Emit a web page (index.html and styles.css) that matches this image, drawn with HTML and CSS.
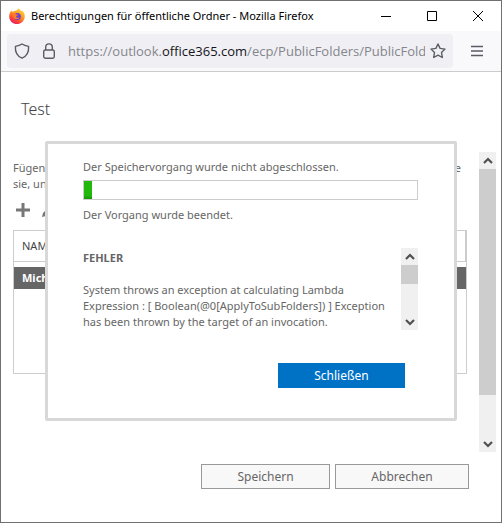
FILE: index.html
```html
<!DOCTYPE html>
<html lang="de">
<head>
    <meta charset="UTF-8">
    <meta name="viewport" content="width=device-width, initial-scale=1.0">
    <title>Berechtigungen für öffentliche Ordner</title>
    <link rel="stylesheet" href="styles.css">
</head>
<body>
    <div class="window">
        <!-- title bar -->
        <header class="titlebar">
            <svg class="logo" viewBox="0 0 16 16">
                <defs>
                    <linearGradient id="flame" x1="0.8" y1="0" x2="0.2" y2="1">
                        <stop offset="0" stop-color="#ffe03a"/>
                        <stop offset="0.45" stop-color="#ff9220"/>
                        <stop offset="0.75" stop-color="#fb4037"/>
                        <stop offset="1" stop-color="#e0157a"/>
                    </linearGradient>
                </defs>
                <path d="M2.4 2.4 C2.8 3 3.2 3.5 3.8 3.9 C5.2 2.8 6.6 2.8 7.6 2.6 C8.4 1.8 9 .8 10 .2 C10.2 1.6 11.6 2 12.6 3.2 C13 3 12.9 2.7 13 2.4 C15 4 15.9 6.2 15.8 8.4 C15.6 12.8 12.2 16 8 16 C3.6 16 .3 12.6 .2 8.4 C.2 6 1.2 4.2 2.4 2.4 Z" fill="url(#flame)"/>
                <circle cx="8.4" cy="8.6" r="3.5" fill="#6b45d0"/>
                <path d="M3.4 6 C5 5 6.5 5.6 7.4 6.4 L9.2 6.8 C8.8 8 7.2 7.8 7 8.8 C7.4 10.2 9.4 9.8 10.4 9.8 C9 11.8 5.6 11.4 4.6 9.4 Z" fill="#ff7a26"/>
            </svg>
            <h1>Berechtigungen für öffentliche Ordner - Mozilla Firefox</h1>
            <div class="controls">
                <button type="button" aria-label="Minimieren"><svg viewBox="0 0 12 12"><path d="M1 6.5H11"/></svg></button>
                <button type="button" aria-label="Maximieren"><svg viewBox="0 0 12 12"><path d="M1.5 1.5H10.5V10.5H1.5Z"/></svg></button>
                <button type="button" aria-label="Fenster schließen"><svg viewBox="0 0 12 12"><path d="M1 1L11 11M11 1L1 11"/></svg></button>
            </div>
        </header>

        <!-- address bar -->
        <nav class="navbar">
            <div class="urlbar">
                <svg class="nav-icon" viewBox="0 0 16 16"><path d="M8 1 C10 2.4 12.4 3 14.6 3.4 C15 9 12.4 13.4 8 15.2 C3.6 13.4 1 9 1.4 3.4 C3.6 3 6 2.4 8 1 Z"/></svg>
                <svg class="nav-icon" viewBox="0 0 16 16"><rect x="2.7" y="7" width="10.6" height="8.2" rx="1.6"/><path d="M4.7 7V4.2A3.3 3.3 0 0 1 11.3 4.2V7"/></svg>
                <a class="url" href="#">https://outlook.<span>office365.com</span>/ecp/PublicFolders/PublicFold</a>
                <button type="button" aria-label="Lesezeichen"><svg class="nav-icon" viewBox="0 0 16 16"><path d="M8 1 L10.1 5.4 L15 6.1 L11.5 9.5 L12.3 14.5 L8 12.2 L3.7 14.5 L4.5 9.5 L1 6.1 L5.9 5.4 Z"/></svg></button>
            </div>
            <button type="button" class="menu" aria-label="Menü"><svg class="nav-icon" viewBox="0 0 16 16"><path d="M2 3.5H14M2 8H14M2 12.5H14"/></svg></button>
        </nav>

        <main class="page">
            <h2>Test</h2>
            <div class="scroll-area">
                <div class="content">
                    <div class="hint">
                        <p>Fügen<br>sie, un</p>
                        <p>e</p>
                    </div>
                    <div class="toolbar">
                        <button type="button" aria-label="Hinzufügen"><svg viewBox="0 0 16 16"><path d="M8 1V15M1 8H15" stroke="#777" stroke-width="3"/></svg></button>
                        <button type="button" aria-label="Bearbeiten"><svg viewBox="0 0 16 16"><path d="M1 15L2 11L11 2L14 5L5 14Z" fill="#777"/></svg></button>
                    </div>
                    <div class="list">
                        <table>
                            <thead>
                                <tr><th>NAME</th></tr>
                            </thead>
                            <tbody>
                                <tr><td>Mich</td></tr>
                            </tbody>
                        </table>
                    </div>
                </div>
                <div class="scrollbar">
                    <button type="button" aria-label="Nach oben"><svg viewBox="0 0 10 10"><path d="M1 7L5 3L9 7"/></svg></button>
                    <div class="track"><div class="thumb"></div></div>
                    <button type="button" aria-label="Nach unten"><svg viewBox="0 0 10 10"><path d="M1 3L5 7L9 3"/></svg></button>
                </div>
            </div>
            <div class="actions">
                <button type="button">Speichern</button>
                <button type="button">Abbrechen</button>
            </div>

            <!-- error dialog -->
            <div class="dialog" role="dialog">
                <p>Der Speichervorgang wurde nicht abgeschlossen.</p>
                <div class="progress"><div class="bar"></div></div>
                <p>Der Vorgang wurde beendet.</p>
                <div class="error">
                    <div class="error-text">
                        <h3>FEHLER</h3>
                        <p>System throws an exception at calculating Lambda<br>Expression : [ Boolean(@0[ApplyToSubFolders]) ] Exception<br>has been thrown by the target of an invocation.</p>
                    </div>
                    <div class="scrollbar">
                        <button type="button" aria-label="Nach oben"><svg viewBox="0 0 10 10"><path d="M1 7L5 3L9 7"/></svg></button>
                        <div class="track"><div class="thumb"></div></div>
                        <button type="button" aria-label="Nach unten"><svg viewBox="0 0 10 10"><path d="M1 3L5 7L9 3"/></svg></button>
                    </div>
                </div>
                <button type="button" class="close">Schließen</button>
            </div>
        </main>
    </div>
</body>
</html>
```
FILE: styles.css
```css
* {
    margin: 0;
    padding: 0;
    box-sizing: border-box;
}

body {
    font-family: "Segoe UI", "Noto Sans", "Open Sans", sans-serif;
    font-size: 11px;
    line-height: 16px;
    color: #666;
    background: #fff;
}

button {
    font-family: inherit;
    border: none;
    background: none;
    cursor: pointer;
}

svg {
    display: block;
}

.window {
    min-height: 100vh;
    border: 1px solid #707070;
}

/* title bar */
.titlebar {
    display: flex;
    align-items: center;
    height: 30px;
    padding-left: 8px;
}

.logo {
    width: 16px;
    height: 16px;
    margin-right: 6px;
}

.titlebar h1 {
    flex: 1;
    font-size: 11px;
    font-weight: 400;
    color: #000;
    white-space: nowrap;
}

.controls {
    display: flex;
}

.controls button {
    display: flex;
    align-items: center;
    justify-content: center;
    width: 46px;
    height: 30px;
}

.controls svg {
    width: 12px;
    height: 12px;
    fill: none;
    stroke: #000;
}

/* address bar */
.navbar {
    display: flex;
    align-items: center;
    height: 41px;
    padding: 0 16px 0 6px;
    background: #f9f9fb;
    border-bottom: 1px solid #ccc;
}

.urlbar {
    display: flex;
    flex: 1;
    align-items: center;
    gap: 11px;
    min-width: 0;
    height: 34px;
    padding: 0 7px;
    border-radius: 4px;
    background: #f0f0f4;
}

.nav-icon {
    flex: none;
    width: 16px;
    height: 16px;
    fill: none;
    stroke: #5b5b66;
    stroke-width: 1.4;
    stroke-linejoin: round;
}

.url {
    flex: 1;
    min-width: 0;
    margin-right: -6px;
    overflow: hidden;
    font-family: "Segoe UI", "Open Sans", "Noto Sans", sans-serif;
    font-size: 13px;
    line-height: 20px;
    color: #85858c;
    text-decoration: none;
    white-space: nowrap;
}

.url span {
    color: #15141a;
}

.menu {
    margin-left: 16px;
}

/* page */
.page {
    position: relative;
    padding: 24px 5px 33px 12px;
}

h2 {
    padding-left: 8px;
    font-size: 16px;
    font-weight: 300;
    line-height: 26px;
    color: #444;
}

.scroll-area {
    display: flex;
    gap: 12px;
    height: 300px;
    margin-top: 30px;
}

.content {
    flex: 1;
    padding-top: 8px;
}

.hint {
    display: flex;
    justify-content: space-between;
    padding-right: 6px;
}

.toolbar {
    display: flex;
    gap: 10px;
    padding: 10px 2px 12px;
}

.toolbar svg {
    width: 16px;
    height: 16px;
}

.list {
    height: 144px;
    border: 1px solid #ccc;
}

table {
    width: 100%;
    border-spacing: 0;
}

th,
td {
    padding-left: 8px;
    text-align: left;
}

th {
    height: 31px;
    font-weight: 400;
    color: #444;
    border-right: 1px solid #ccc;
    border-bottom: 1px solid #ccc;
}

tbody::before {
    content: "";
    display: block;
    height: 5px;
}

td {
    height: 22px;
    font-weight: 700;
    color: #fff;
    background: #666;
}

/* scrollbars */
.scrollbar {
    display: flex;
    flex: none;
    flex-direction: column;
    width: 17px;
    background: #f0f0f0;
}

.scrollbar button {
    display: flex;
    align-items: center;
    justify-content: center;
    height: 17px;
}

.scrollbar svg {
    width: 10px;
    height: 10px;
    fill: none;
    stroke: #505050;
    stroke-width: 2.2;
}

.track {
    flex: 1;
}

.thumb {
    height: 85%;
    background: #cdcdcd;
}

.actions {
    display: flex;
    justify-content: flex-end;
    gap: 5px;
    margin-top: 12px;
    padding-right: 27px;
}

.actions button {
    width: 129px;
    height: 25px;
    font-size: 12px;
    color: #666;
    background: #f8f8f8;
    border: 1px solid #999;
}

.actions button:last-child {
    width: 134px;
}

/* dialog */
.dialog {
    position: absolute;
    top: 69px;
    right: 44px;
    left: 44px;
    height: 280px;
    padding: 15px 36px 0 35px;
    background: #fff;
    border: 3px solid #d8d8d8;
    border-radius: 2px;
}

.progress {
    height: 20px;
    margin: 5px 0 7px;
    border: 1px solid #ccc;
}

.bar {
    width: 8px;
    height: 18px;
    background: linear-gradient(#22b80c 80%, #189208);
}

.error {
    display: flex;
    height: 82px;
    margin-top: 25px;
}

.error-text {
    flex: 1;
    min-width: 0;
    padding-top: 2px;
    white-space: nowrap;
}

h3 {
    margin-bottom: 16px;
    font-size: 11px;
    line-height: 16px;
}

.error .thumb {
    height: 40%;
}

.close {
    display: block;
    width: 127px;
    height: 25px;
    margin: 33px 13px 0 auto;
    font-size: 12px;
    color: #fff;
    background: #0072c6;
}
```
